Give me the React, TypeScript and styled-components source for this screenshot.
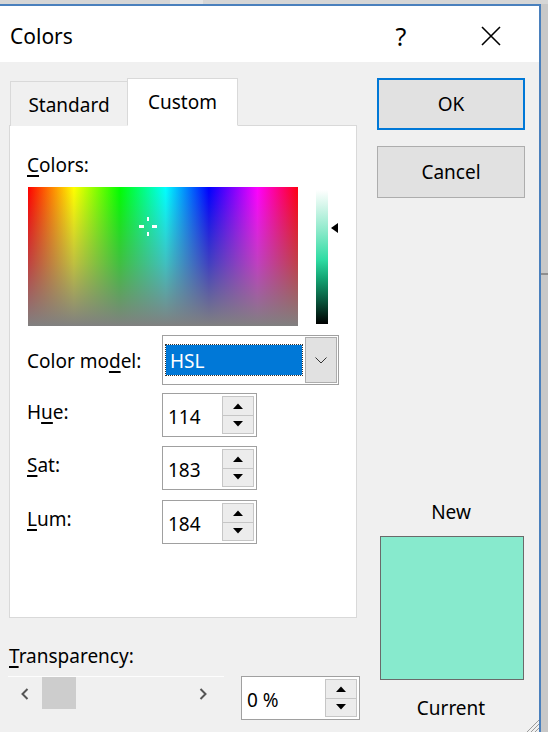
import React from "react";
import styled, { createGlobalStyle } from "styled-components";

const Global = createGlobalStyle`
  html, body { margin: 0; padding: 0; }
  body {
    width: 548px; height: 732px; overflow: hidden;
    background: #d6d6d6;
    font-family: "Noto Sans", "Open Sans", sans-serif;
    color: #000;
  }
`;

const FS = "19px";

const Page = styled.div`
  width: 548px; height: 732px;
  display: flex; flex-direction: column;
  background: #d6d6d6;
`;

const TopStrip = styled.div`
  height: 4px; flex: none;
  display: flex;
`;
const TopGlare = styled.div`
  margin-left: 170px; width: 33px; background: #e4e4e4;
`;

const Row = styled.div`
  flex: 1; display: flex; min-height: 0;
`;

const Dialog = styled.div`
  width: 539px; flex: none;
  border-top: 2px solid #4a80bd;
  border-right: 2px solid #4a80bd;
  display: flex; flex-direction: column;
  position: relative;
`;

const Outside = styled.div`
  flex: 1;
  background: #c8c8c8;
  display: flex; flex-direction: column;
`;
const OutsideLine = styled.div`
  margin-top: 269px; height: 2px; background: #8e8e8e;
`;

const TitleBar = styled.div`
  height: 56px; flex: none;
  background: #fff;
  display: flex; align-items: center;
  padding-left: 10px;
  font-size: 21px;
`;
const Title = styled.div`
  flex: 1; padding-top: 4px; letter-spacing: 0px;
`;
const TitleBtn = styled.div<{ $w: number }>`
  width: ${(p) => p.$w}px; height: 56px;
  display: flex; align-items: center; justify-content: center;
  font-size: 25px;
  padding-top: 4px;
  box-sizing: border-box;
`;

const Body = styled.div`
  flex: 1; background: #f0f0f0;
  display: flex;
  position: relative;
`;

const LeftCol = styled.div`
  width: 368px; flex: none;
  padding: 16px 0 0 9px;
  box-sizing: border-box;
  display: flex; flex-direction: column;
`;

const TabRow = styled.div`
  display: flex; align-items: flex-end; height: 48px;
  padding-left: 1px;
  position: relative; z-index: 1;
  margin-bottom: -1px;
`;

const Tab = styled.div<{ $active?: boolean }>`
  box-sizing: border-box;
  height: ${(p) => (p.$active ? 48 : 45)}px;
  width: ${(p) => (p.$active ? 111 : 117)}px;
  background: ${(p) => (p.$active ? "#fff" : "#f0f0f0")};
  border: 1px solid #d9d9d9;
  border-bottom: ${(p) => (p.$active ? "1px solid #fff" : "none")};
  border-right: ${(p) => (p.$active ? "1px solid #d9d9d9" : "none")};
  display: flex; align-items: center; justify-content: center;
  font-size: ${FS};
  padding-top: ${(p) => (p.$active ? 0 : 1)}px;
  padding-bottom: ${(p) => (p.$active ? 1 : 0)}px;
`;

const Panel = styled.div`
  width: 348px; height: 493px;
  box-sizing: border-box;
  background: #fff;
  border: 1px solid #d9d9d9;
  padding: 27px 0 0 17px;
  display: flex; flex-direction: column;
`;

const Label = styled.div`
  font-size: ${FS}; line-height: 24px; height: 24px;
`;

const U = styled.span`
  text-decoration: underline;
  text-underline-offset: 3px;
  text-decoration-thickness: 1.5px;
`;

const PickerRow = styled.div`
  display: flex; margin-top: 10px; margin-left: 1px;
`;

const Spectrum = styled.div`
  width: 270px; height: 139px;
  position: relative;
  background:
    linear-gradient(to bottom, rgba(128,128,128,0) 0%, rgba(128,128,128,0.5) 55%, rgb(128,128,128) 100%),
    linear-gradient(to right, #f00 0%, #ff0 17%, #0f0 34%, #0ff 51%, #00f 67%, #f0f 85%, #f01 100%);
`;

const Cross = styled.svg`
  position: absolute; left: 110px; top: 30px;
`;

const LumWrap = styled.div`
  display: flex; align-items: flex-start;
  margin-left: 18px; padding-top: 3px;
`;

const LumBar = styled.div`
  width: 12px; height: 134px;
  background: linear-gradient(to bottom, #ffffff 0%, #d4f6ea 12%, #8eeacb 30%, #2fdca3 52%, #13a473 66%, #0a5a3f 82%, #000 100%);
`;

const Arrow = styled.svg`
  margin-left: 3px; margin-top: 33px;
`;

const FieldRow = styled.div<{ $mt: number }>`
  display: flex; align-items: center;
  margin-top: ${(p) => p.$mt}px;
`;

const FieldLabel = styled(Label)<{ $dy?: number }>`
  width: 136px; flex: none;
  margin-top: ${(p) => p.$dy ?? -6}px;
`;

const Combo = styled.div`
  width: 177px; height: 50px; box-sizing: border-box;
  border: 1px solid #a0a0a0;
  background: #fff;
  display: flex; align-items: center;
  padding: 0 1px 0 3px;
  margin-left: -1px;
`;

const ComboSel = styled.div`
  flex: 1; height: 30px; box-sizing: border-box;
  background: #0078d7; color: #fff;
  outline: 1px dotted #333; outline-offset: 0px;
  display: flex; align-items: center;
  padding-left: 4px; padding-top: 2px;
  font-size: ${FS};
`;

const ComboBtn = styled.div`
  width: 32px; height: 46px; box-sizing: border-box;
  margin-left: 3px;
  background: #e1e1e1;
  border: 1px solid #adadad;
  display: flex; align-items: center; justify-content: center;
`;

const SpinBox = styled.div<{ $w: number }>`
  width: ${(p) => p.$w}px; height: 44px; box-sizing: border-box;
  border: 1px solid #a0a0a0; background: #fff;
  display: flex; align-items: center;
  padding: 2px 2px 2px 5px;
  margin-left: -1px;
`;

const SpinValue = styled.div`
  flex: 1; font-size: ${FS}; padding-top: 3px;
`;

const SpinBtns = styled.div`
  width: 32px; height: 38px;
  display: flex; flex-direction: column;
`;

const SpinBtn = styled.div`
  flex: 1; box-sizing: border-box;
  background: #ececec;
  border: 1px solid #c6c6c6;
  display: flex; align-items: center; justify-content: center;
  & + & { border-top: none; }
`;

const Transparency = styled.div`
  margin-top: 26px;
  display: flex; flex-direction: column;
`;

const TransRow = styled.div`
  display: flex; align-items: flex-start; margin-top: 8px; margin-left: -1px;
`;

const Slider = styled.div`
  width: 216px; height: 33px;
  border-top: 1px solid #fdfdfd;
  display: flex; align-items: center;
`;

const SlideArrow = styled.svg<{ $ml: number }>`
  margin-left: ${(p) => p.$ml}px; flex: none;
`;

const Thumb = styled.div`
  width: 34px; height: 32px; background: #cdcdcd;
  margin-left: 13px; align-self: flex-start;
`;

const PctBox = styled(SpinBox)`
  margin-left: 17px;
`;

const RightCol = styled.div`
  width: 148px; margin-left: 9px;
  padding-top: 16px;
  display: flex; flex-direction: column; align-items: stretch;
`;

const Button = styled.div<{ $default?: boolean }>`
  height: 52px; box-sizing: border-box;
  background: #e1e1e1;
  border: ${(p) => (p.$default ? "2px solid #0078d7" : "1px solid #adadad")};
  display: flex; align-items: center; justify-content: center;
  font-size: ${FS};
  & + & { margin-top: 16px; }
`;

const SwatchGroup = styled.div`
  margin-top: auto; margin-bottom: 12px;
  display: flex; flex-direction: column; align-items: center;
`;

const SwatchLabel = styled(Label)`
  text-align: center;
`;

const Swatch = styled.div`
  width: 144px; height: 144px; box-sizing: border-box;
  background: #87eacd; border: 1px solid #6a6a6a;
  margin: 12px 0 16px 2px;
`;

const Grip = styled.svg`
  position: absolute; right: 0; bottom: 0;
`;

const Up = () => (
  <svg width="10" height="6" viewBox="0 0 10 6"><path d="M0 6 L5 0.5 L10 6 Z" fill="#000" /></svg>
);
const Down = () => (
  <svg width="10" height="6" viewBox="0 0 10 6"><path d="M0 0 L5 5.5 L10 0 Z" fill="#000" /></svg>
);

function Spinner({ value, w }: { value: string; w: number }) {
  return (
    <SpinBox $w={w}>
      <SpinValue>{value}</SpinValue>
      <SpinBtns>
        <SpinBtn><Up /></SpinBtn>
        <SpinBtn><Down /></SpinBtn>
      </SpinBtns>
    </SpinBox>
  );
}

export default function App() {
  return (
    <Page>
      <Global />
      <TopStrip><TopGlare /></TopStrip>
      <Row>
        <Dialog>
          <TitleBar>
            <Title>Colors</Title>
            <TitleBtn $w={36}>?</TitleBtn>
            <TitleBtn $w={46} style={{ marginLeft: 49, marginRight: 25 }}>
              <svg width="20" height="20" viewBox="0 0 20 20">
                <path d="M1 1 L19 19 M19 1 L1 19" stroke="#000" strokeWidth="1.6" fill="none" />
              </svg>
            </TitleBtn>
          </TitleBar>
          <Body>
            <LeftCol>
              <TabRow>
                <Tab>Standard</Tab>
                <Tab $active>Custom</Tab>
              </TabRow>
              <Panel>
                <Label><U>C</U>olors:</Label>
                <PickerRow>
                  <Spectrum>
                    <Cross width="20" height="20" viewBox="0 0 20 20">
                      <rect x="9" y="0" width="2" height="4" fill="#fff" />
                      <rect x="9" y="15" width="2" height="4" fill="#fff" />
                      <rect x="1" y="8" width="5" height="3" fill="#fff" />
                      <rect x="14" y="8" width="5" height="3" fill="#fff" />
                    </Cross>
                  </Spectrum>
                  <LumWrap>
                    <LumBar />
                    <Arrow width="8" height="10" viewBox="0 0 8 10">
                      <path d="M0 5 L7 0 L7 10 Z" fill="#000" />
                    </Arrow>
                  </LumWrap>
                </PickerRow>
                <FieldRow $mt={9}>
                  <FieldLabel $dy={2}>Color mo<U>d</U>el:</FieldLabel>
                  <Combo>
                    <ComboSel>HSL</ComboSel>
                    <ComboBtn>
                      <svg width="12" height="7" viewBox="0 0 12 7">
                        <path d="M0.5 0.5 L6 6 L11.5 0.5" stroke="#333" strokeWidth="1" fill="none" />
                      </svg>
                    </ComboBtn>
                  </Combo>
                </FieldRow>
                <FieldRow $mt={8}>
                  <FieldLabel>H<U>u</U>e:</FieldLabel>
                  <Spinner value="114" w={95} />
                </FieldRow>
                <FieldRow $mt={9}>
                  <FieldLabel><U>S</U>at:</FieldLabel>
                  <Spinner value="183" w={95} />
                </FieldRow>
                <FieldRow $mt={10}>
                  <FieldLabel><U>L</U>um:</FieldLabel>
                  <Spinner value="184" w={95} />
                </FieldRow>
              </Panel>
              <Transparency>
                <Label><U>T</U>ransparency:</Label>
                <TransRow>
                  <Slider>
                    <SlideArrow $ml={13} width="8" height="12" viewBox="0 0 8 12">
                      <path d="M6.5 1 L1.5 6 L6.5 11" stroke="#555" strokeWidth="2" fill="none" />
                    </SlideArrow>
                    <Thumb />
                    <SlideArrow $ml={123} width="8" height="12" viewBox="0 0 8 12">
                      <path d="M1.5 1 L6.5 6 L1.5 11" stroke="#555" strokeWidth="2" fill="none" />
                    </SlideArrow>
                  </Slider>
                  <PctBox $w={119}>
                    <SpinValue>0 %</SpinValue>
                    <SpinBtns>
                      <SpinBtn><Up /></SpinBtn>
                      <SpinBtn><Down /></SpinBtn>
                    </SpinBtns>
                  </PctBox>
                </TransRow>
              </Transparency>
            </LeftCol>
            <RightCol>
              <Button $default>OK</Button>
              <Button>Cancel</Button>
              <SwatchGroup>
                <SwatchLabel>New</SwatchLabel>
                <Swatch />
                <SwatchLabel>Current</SwatchLabel>
              </SwatchGroup>
            </RightCol>
            <Grip width="16" height="16" viewBox="0 0 16 16">
              <path d="M16 4 L4 16 M16 8 L8 16 M16 12 L12 16" stroke="#9a9a9a" strokeWidth="1" />
            </Grip>
          </Body>
        </Dialog>
        <Outside><OutsideLine /></Outside>
      </Row>
    </Page>
  );
}
